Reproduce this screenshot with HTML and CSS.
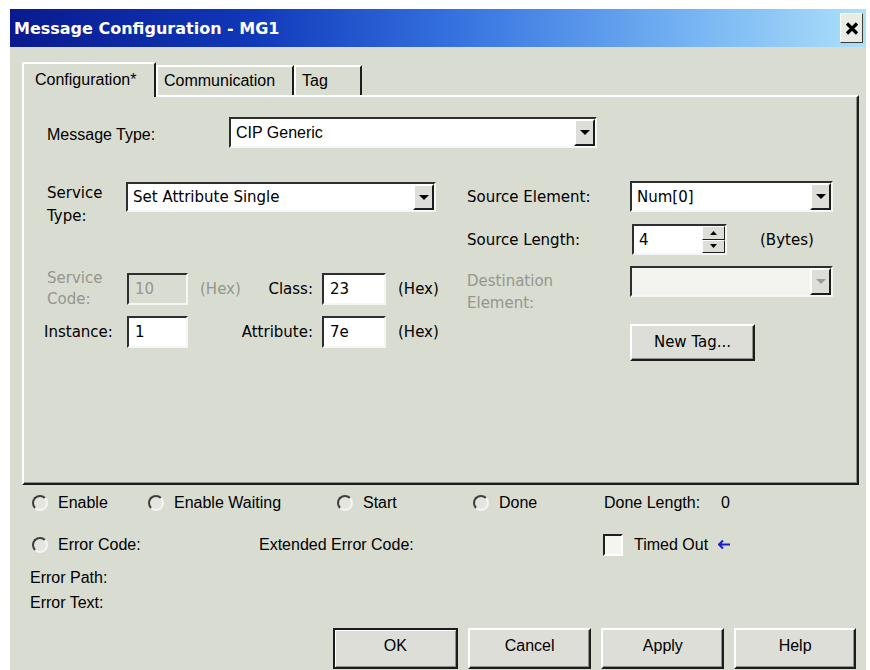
FILE: index.html
```html
<!DOCTYPE html>
<html>
<head>
<meta charset="utf-8">
<title>Message Configuration - MG1</title>
<link rel="stylesheet" href="styles.css">
</head>
<body>
<div class="dialog">
  <div class="titlebar">
    <span class="title">Message Configuration - MG1</span>
    <span class="close">
      <svg width="14" height="13" viewBox="0 0 14 13"><path d="M2 1.5L12 11.5M12 1.5L2 11.5" stroke="#000" stroke-width="3.2" fill="none"/></svg>
    </span>
  </div>

  <div class="client">
    <div class="tabs">
      <div class="tab tab-active tab-config">Configuration*</div>
      <div class="tab tab-comm">Communication</div>
      <div class="tab tab-tag">Tag</div>
    </div>

    <div class="panel">
      <div class="row-msgtype">
        <span class="lbl-msgtype">Message Type:</span>
        <div class="combo combo-msgtype">
          <span class="combo-val ms">CIP Generic</span>
          <span class="drop"><svg width="10" height="5" viewBox="0 0 10 5"><path d="M0 0h10L5 5z"/></svg></span>
        </div>
      </div>

      <div class="cols">
        <div class="col-left">
          <div class="row-service-type">
            <span class="lbl2">Service<br>Type:</span>
            <div class="combo combo-service">
              <span class="combo-val">Set Attribute Single</span>
              <span class="drop"><svg width="10" height="5" viewBox="0 0 10 5"><path d="M0 0h10L5 5z"/></svg></span>
            </div>
          </div>

          <div class="row-field row-code">
            <span class="lbl2 lbl2-grey">Service<br>Code:</span>
            <span class="edit edit-small edit-disabled">10</span>
            <div class="mid">
              <span class="grey">(Hex)</span>
              <span>Class:</span>
            </div>
            <span class="edit edit-hex">23</span>
            <span class="hex">(Hex)</span>
          </div>

          <div class="row-field row-instance">
            <span class="lbl-instance">Instance:</span>
            <span class="edit edit-small">1</span>
            <div class="mid mid-end">
              <span>Attribute:</span>
            </div>
            <span class="edit edit-hex">7e</span>
            <span class="hex">(Hex)</span>
          </div>
        </div>

        <div class="col-right">
          <div class="row-src-elem">
            <span class="lbl-right">Source Element:</span>
            <div class="combo combo-right">
              <span class="combo-val">Num[0]</span>
              <span class="drop"><svg width="10" height="5" viewBox="0 0 10 5"><path d="M0 0h10L5 5z"/></svg></span>
            </div>
          </div>

          <div class="row-src-len">
            <span class="lbl-right lbl-len">Source Length:</span>
            <div class="spin">
              <span class="spin-val">4</span>
              <span class="spin-btns">
                <span class="spin-up"><svg width="7" height="4" viewBox="0 0 7 4"><path d="M0 4h7L3.5 0z"/></svg></span>
                <span class="spin-down"><svg width="7" height="4" viewBox="0 0 7 4"><path d="M0 0h7L3.5 4z"/></svg></span>
              </span>
            </div>
            <span class="bytes">(Bytes)</span>
          </div>

          <div class="row-dest">
            <span class="lbl-right lbl-dest grey">Destination<br>Element:</span>
            <div class="combo combo-right combo-disabled">
              <span class="combo-val"></span>
              <span class="drop"><svg width="10" height="5" viewBox="0 0 10 5"><path d="M0 0h10L5 5z" fill="#9a9c96"/></svg></span>
            </div>
          </div>

          <div class="row-newtag">
            <span class="btn btn-newtag">New Tag...</span>
          </div>
        </div>
      </div>
    </div>

    <div class="status">
      <div class="status-row">
        <span class="cell cell-enable"><span class="radio"></span>Enable</span>
        <span class="cell cell-waiting"><span class="radio"></span>Enable Waiting</span>
        <span class="cell cell-start"><span class="radio"></span>Start</span>
        <span class="cell cell-done"><span class="radio"></span>Done</span>
        <span class="cell">Done Length:<span class="done-len">0</span></span>
      </div>
      <div class="status-row status-row2">
        <span class="cell cell-errcode"><span class="radio"></span>Error Code:</span>
        <span class="cell cell-exterr">Extended Error Code:</span>
        <span class="cell"><span class="check"></span>Timed Out<svg class="arrow" width="13" height="9" viewBox="0 0 13 9"><path d="M5 0.5L1 4.5L5 8.5M1 4.5H12" stroke="#1c1cc8" stroke-width="2" fill="none"/></svg></span>
      </div>
      <div class="err-line err-first">Error Path:</div>
      <div class="err-line">Error Text:</div>
    </div>

    <div class="buttons">
      <span class="btn btn-dlg btn-default btn-ok">OK</span>
      <span class="btn btn-dlg btn-cancel">Cancel</span>
      <span class="btn btn-dlg btn-apply">Apply</span>
      <span class="btn btn-dlg btn-help">Help</span>
    </div>
  </div>
</div>
</body>
</html>
```

FILE: styles.css
```css
* {
  box-sizing: border-box;
}

html, body {
  margin: 0;
  padding: 0;
  background: #ffffff;
}

body {
  width: 870px;
  height: 670px;
  overflow: hidden;
  font-family: "Liberation Sans", Arial, sans-serif;
  font-size: 16px;
  color: #000;
}

/* window frame */
.dialog {
  margin: 9px 0 0 10px;
  width: 856px;
  height: 661px;
  background: #d9dcd1;
}

.titlebar {
  height: 38px;
  display: flex;
  align-items: center;
  padding: 0 3px 0 4px;
  background: linear-gradient(to right, #0a1a8e 0%, #1038b8 28%, #3572e0 52%, #72b0f2 78%, #ace0fa 100%);
}

.title {
  font-family: "DejaVu Sans", sans-serif;
  font-weight: bold;
  font-size: 16px;
  color: #fff;
}

.close {
  margin-left: auto;
  width: 23px;
  height: 30px;
  display: flex;
  align-items: center;
  justify-content: center;
  background: #e9ebe5;
  border: 1px solid;
  border-color: #ffffff #3a3a3a #3a3a3a #ffffff;
}

.client {
  padding: 15px 0 0 12px;
}

/* tab strip */
.tabs {
  display: flex;
  align-items: flex-end;
  height: 33px;
}

.tab {
  height: 30px;
  display: flex;
  align-items: center;
  padding-left: 6px;
  border-top: 2px solid #ffffff;
  border-left: 2px solid #ffffff;
  border-right: 2px solid #1c1c1c;
  background: #d9dcd1;
}

.tab-active {
  height: 35px;
  margin-bottom: -2px;
  padding-left: 11px;
  padding-bottom: 2px;
  position: relative;
  z-index: 1;
}

.tab-config { width: 134px; }
.tab-comm { width: 138px; }
.tab-tag { width: 68px; }

/* tab page */
.panel {
  width: 837px;
  height: 390px;
  border-top: 2px solid #ffffff;
  border-left: 2px solid #ffffff;
  border-right: 2px solid #1c1c1c;
  border-bottom: 2px solid #1c1c1c;
  box-shadow: inset -1px -1px 0 #8e908a;
  padding: 20px 0 0 23px;
  font-family: "DejaVu Sans", sans-serif;
  font-size: 15px;
}

.row-msgtype {
  display: flex;
  align-items: center;
  height: 31px;
  font-family: "Liberation Sans", Arial, sans-serif;
  font-size: 16px;
}

.lbl-msgtype {
  width: 182px;
  padding-top: 4px;
}

.ms {
  font-family: "Liberation Sans", Arial, sans-serif;
  font-size: 16px;
}

/* sunken controls */
.combo {
  display: flex;
  height: 31px;
  background: #ffffff;
  border: 2px solid;
  border-color: #2e2e2e #f6f6f4 #f6f6f4 #2e2e2e;
}

.combo-val {
  flex: 1;
  display: flex;
  align-items: center;
  padding-left: 5px;
}

.drop {
  width: 21px;
  display: flex;
  align-items: center;
  justify-content: center;
  background: #dcded7;
  border: 2px solid;
  border-color: #ffffff #1c1c1c #1c1c1c #ffffff;
}

.combo-msgtype { width: 368px; }
.combo-service { width: 310px; height: 30px; }
.combo-right { width: 203px; }

.combo-disabled {
  background: #f3f4f0;
}

.cols {
  display: flex;
  margin-top: 33px;
}

.col-left {
  width: 420px;
}

.row-service-type {
  display: flex;
  margin-top: 1px;
}

.lbl2 {
  width: 79px;
  line-height: 23px;
}

.lbl2-grey {
  width: 80px;
  line-height: 21px;
  color: #94968f;
}

.grey {
  color: #94968f;
}

.row-field {
  display: flex;
  align-items: center;
  height: 32px;
}

.row-code {
  margin-top: 45px;
}

.row-instance {
  margin-top: 11px;
}

.lbl-instance {
  width: 80px;
  margin-left: -3px;
  padding-left: 0;
}

.edit {
  height: 32px;
  display: flex;
  align-items: center;
  padding-left: 6px;
  background: #ffffff;
  border: 2px solid;
  border-color: #2e2e2e #f6f6f4 #f6f6f4 #2e2e2e;
}

.edit-small { width: 61px; }
.edit-hex { width: 64px; }

.row-instance .edit-small {
  margin-left: 3px;
}

.edit-disabled {
  background: #d9dcd1;
  color: #94968f;
}

.mid {
  width: 134px;
  display: flex;
  justify-content: space-between;
  padding: 0 9px 0 12px;
}

.mid-end {
  justify-content: flex-end;
}

.hex {
  margin-left: 12px;
}

/* right column */
.row-src-elem {
  display: flex;
  align-items: center;
  height: 31px;
}

.lbl-right {
  width: 163px;
}

.lbl-len {
  width: 165px;
}

.row-src-len {
  display: flex;
  align-items: center;
  height: 31px;
  margin-top: 12px;
}

.spin {
  width: 95px;
  height: 31px;
  display: flex;
  background: #ffffff;
  border: 2px solid;
  border-color: #2e2e2e #f6f6f4 #f6f6f4 #2e2e2e;
}

.spin-val {
  flex: 1;
  display: flex;
  align-items: center;
  padding-left: 5px;
}

.spin-btns {
  width: 23px;
  display: flex;
  flex-direction: column;
}

.spin-up, .spin-down {
  flex: 1;
  display: flex;
  align-items: center;
  justify-content: center;
  background: #dcded7;
  border: 1px solid;
  border-color: #ffffff #1c1c1c #1c1c1c #ffffff;
}

.bytes {
  margin-left: 33px;
}

.row-dest {
  display: flex;
  align-items: flex-start;
  margin-top: 11px;
}

.lbl-dest {
  line-height: 22px;
  margin-top: 4px;
}

.row-newtag {
  margin-top: 10px;
  padding-left: 163px;
}

/* raised buttons */
.btn {
  display: flex;
  align-items: center;
  justify-content: center;
  background: #dcded7;
  border: 2px solid;
  border-color: #ffffff #1c1c1c #1c1c1c #ffffff;
  box-shadow: inset -1px -1px 0 #8e908a;
}

.btn-newtag {
  width: 125px;
  height: 37px;
  padding-bottom: 2px;
}

/* status area below the tab page */
.status {
  padding-left: 10px;
}

.status-row {
  display: flex;
  align-items: center;
  height: 24px;
  margin-top: 6px;
}

.status-row2 {
  margin-top: 18px;
}

.cell {
  display: flex;
  align-items: center;
}

.cell-enable { width: 116px; }
.cell-waiting { width: 189px; }
.cell-start { width: 136px; }
.cell-done { width: 131px; }
.cell-errcode { width: 227px; }
.cell-exterr { width: 344px; }

.done-len {
  margin-left: 21px;
}

.radio {
  width: 16px;
  height: 16px;
  margin-right: 10px;
  border-radius: 50%;
  border: 2px solid;
  border-color: #3e3e3e #f4f4f2 #f4f4f2 #3e3e3e;
  background: #e4e6de;
}

.check {
  width: 20px;
  height: 22px;
  margin-right: 11px;
  background: #f4f5f1;
  border: 2px solid;
  border-color: #1e1e1e #ffffff #ffffff #1e1e1e;
}

.arrow {
  margin-left: 10px;
  margin-top: -1px;
}

.err-line {
  height: 25px;
  line-height: 25px;
  margin-left: -2px;
}

.err-first {
  margin-top: 8px;
}

/* dialog buttons */
.buttons {
  display: flex;
  margin-top: 13px;
  padding-left: 311px;
}

.btn-dlg {
  height: 41px;
  padding-bottom: 5px;
  margin-right: 10px;
}

.btn-ok { width: 126px; }
.btn-cancel { width: 125px; }
.btn-apply { width: 124px; }
.btn-help { width: 123px; }

.btn-default {
  border: 2px solid #1c1c1c;
  box-shadow: inset 1px 1px 0 #ffffff, inset -1px -1px 0 #8e908a;
}
```
